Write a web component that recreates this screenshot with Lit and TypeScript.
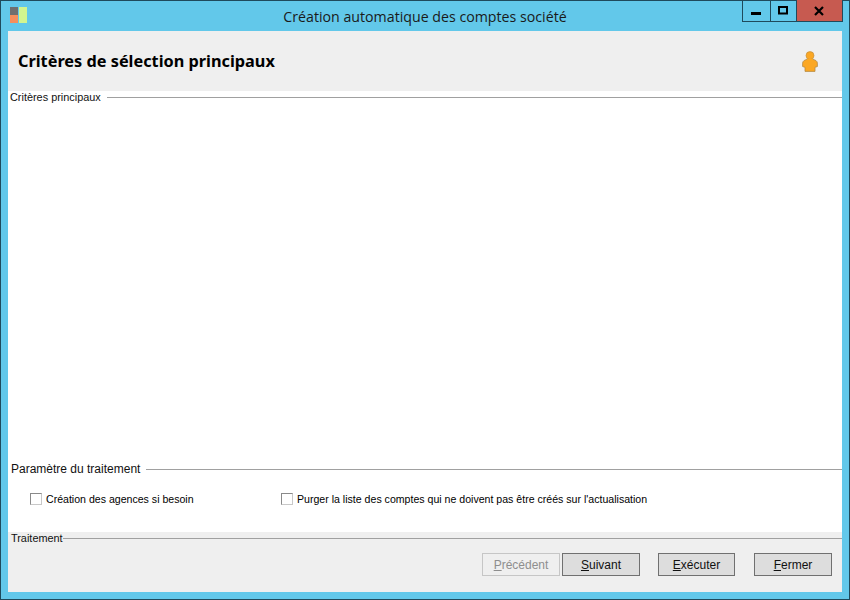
import { LitElement, html, css } from "lit";
import { customElement } from "lit/decorators.js";

@customElement("app-root")
export class AppRoot extends LitElement {
  static styles = css`
    :host { display: block; width: 850px; height: 600px; font-family: "Liberation Sans", Tahoma, sans-serif; font-size: 10.9px; color: #000; }
    .window { box-sizing: border-box; width: 850px; height: 600px; background: #62c8ea; border: 1px solid #1f4a5c; display: flex; flex-direction: column; padding: 0 7px 7px 7px; }
    .titlebar { height: 30px; flex: none; display: flex; align-items: flex-start; position: relative; }
    .logo { position: absolute; left: 2px; top: 6px; width: 17px; height: 17px; display: grid; grid-template-columns: 8px 8px; grid-template-rows: 8px 8px; gap: 0 1px; }
    .logo .a { background: #6f6f6f; }
    .logo .b { background: #d3f58f; grid-row: 1 / 3; grid-column: 2; }
    .logo .c { background: #f58e5c; }
    .title { flex: 1; text-align: center; font-size: 14.2px; line-height: 31px; color: #1a1a1a; font-family: "Open Sans", sans-serif; }
    .controls { position: absolute; right: -1px; top: -1px; display: flex; height: 22px; box-sizing: border-box; border: 1px solid #1f4a5c; border-top: 0; }
    .ctl { height: 21px; display: flex; align-items: center; justify-content: center; }
    .ctl.min { width: 27px; border-right: 1px solid #1f4a5c; }
    .ctl.max { width: 25px; border-right: 1px solid #1f4a5c; }
    .ctl.close { width: 45px; background: #c75a50; }
    .client { flex: 1; display: flex; flex-direction: column; min-height: 0; }
    .header { height: 60px; flex: none; background: #efefef; display: flex; align-items: center; justify-content: space-between; padding: 0 24px 0 10px; box-sizing: border-box; }
    .header h1 { margin: 0; font-size: 16.3px; font-weight: 700; font-family: "Noto Sans", Tahoma, sans-serif; }
    .body { flex: 1; background: #fff; display: flex; flex-direction: column; justify-content: space-between; }
    .group-title { display: flex; align-items: center; height: 13px; line-height: 13px; color: #111; white-space: nowrap; }
    .group-title .rule { flex: 1; height: 1px; background: #a0a0a0; }
    .g1 { padding: 0 0 0 2px; }
    .g1 .group-title { gap: 6px; }
    .g2 { padding: 0 0 27px 3px; }
    .g2 .group-title { font-size: 12px; gap: 6px; }
    .checks { display: flex; margin-top: 16px; padding-left: 19px; height: 13px; font-size: 10.58px; }
    .check { display: flex; align-items: center; gap: 5px; white-space: nowrap; }
    .check.first { width: 251px; }
    .box { width: 12px; height: 12px; margin-right: -1px; box-sizing: border-box; border: 1px solid #8a8a8a; border-right-color: #c8c8c8; border-bottom-color: #c8c8c8; background: #fff; flex: none; }
    .footer { height: 60px; flex: none; background: #efefef; box-sizing: border-box; padding: 0 0 0 3px; display: flex; flex-direction: column; }
    .footer .group-title { height: 13px; }
    .buttons { display: flex; justify-content: flex-end; margin-top: 8px; padding-right: 10px; }
    button { box-sizing: border-box; width: 78px; height: 23px; padding: 0; margin: 0; font: inherit; font-size: 12px; border: 1px solid #707070; background: #dddddd; color: #111; }
    button.off { background: #efefef; border-color: #c6c6c6; color: #8e8e8e; }
    button u { text-decoration: underline; }
    .b1 { margin-right: 2px; }
    .b2 { margin-right: 18px; }
    .b3 { width: 77px; margin-right: 19px; }
  `;

  render() {
    return html`
      <div class="window">
        <div class="titlebar">
          <div class="logo"><i class="a"></i><i class="b"></i><i class="c"></i></div>
          <div class="title">Création automatique des comptes société</div>
          <div class="controls">
            <div class="ctl min"><svg width="11" height="11" viewBox="0 0 11 11"><rect x="0" y="7" width="10" height="3" fill="#000"/></svg></div>
            <div class="ctl max"><svg width="11" height="10" viewBox="0 0 11 10"><rect x="1" y="1" width="8" height="6.5" fill="none" stroke="#000" stroke-width="2"/></svg></div>
            <div class="ctl close"><svg width="11" height="10" viewBox="0 0 11 10"><path d="M1 1l8 8M9 1l-8 8" stroke="#000" stroke-width="2.2" fill="none"/></svg></div>
          </div>
        </div>
        <div class="client">
          <div class="header">
            <h1>Critères de sélection principaux</h1>
            <svg width="16" height="21" viewBox="0 0 16 21">
              <path d="M5 8.4C2.5 8.9.6 10.2.6 12.2v3.3l2.4.8V20.400h10v-4.100l2.400-.8v-3.300c0-2-1.900-3.300-4.400-3.800z" fill="#fba723" stroke="#b58a45" stroke-width=".8" stroke-linejoin="round"/>
              <circle cx="8" cy="4.600" r="4" fill="#fba723" stroke="#c49040" stroke-width=".7"/>
              <path d="M5 8h6v1.500H5z" fill="#fba723"/>
            </svg>
          </div>
          <div class="body">
            <div class="g1"><div class="group-title"><span>Critères principaux</span><span class="rule"></span></div></div>
            <div class="g2">
              <div class="group-title"><span>Paramètre du traitement</span><span class="rule"></span></div>
              <div class="checks">
                <label class="check first"><span class="box"></span>Création des agences si besoin</label>
                <label class="check"><span class="box"></span>Purger la liste des comptes qui ne doivent pas être créés sur l'actualisation</label>
              </div>
            </div>
          </div>
          <div class="footer">
            <div class="group-title"><span>Traitement</span><span class="rule"></span></div>
            <div class="buttons">
              <button class="off b1"><u>P</u>récédent</button>
              <button class="b2"><u>S</u>uivant</button>
              <button class="b3"><u>E</u>xécuter</button>
              <button><u>F</u>ermer</button>
            </div>
          </div>
        </div>
      </div>
    `;
  }
}
